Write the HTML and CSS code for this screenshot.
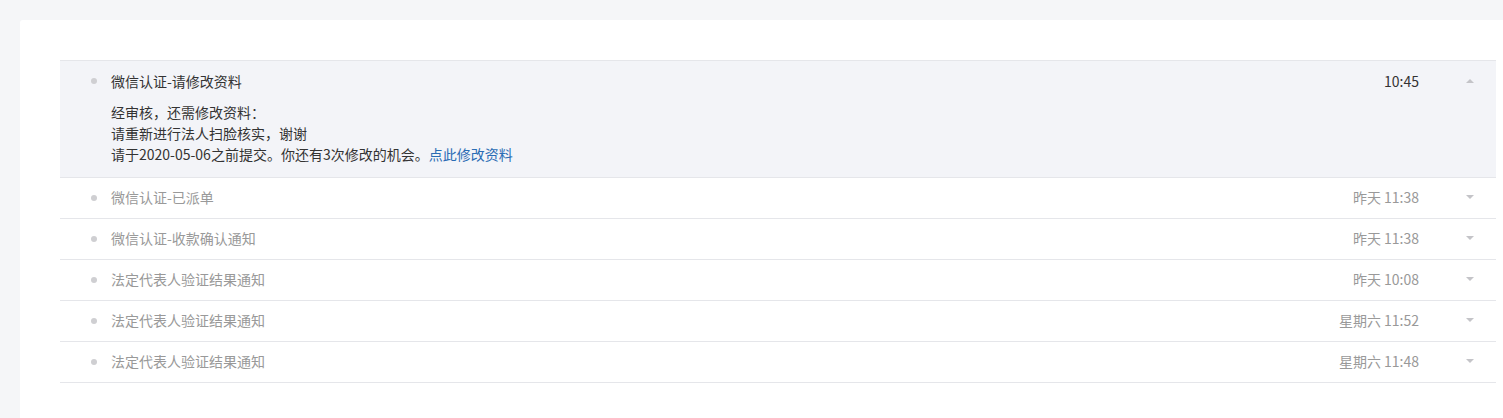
FILE: index.html
```html
<!DOCTYPE html>
<html lang="zh-CN">
<head>
<meta charset="utf-8">
<title>消息通知</title>
<link rel="stylesheet" href="styles.css">
</head>
<body>
<div class="card">
  <ul class="msg-list">
    <li class="msg open">
      <div class="msg-head">
        <span class="dot"></span>
        <span class="title">微信认证-请修改资料</span>
        <span class="time">10:45</span>
        <span class="caret"><span class="tri up"></span></span>
      </div>
      <div class="msg-body">
        <p>经审核，还需修改资料：</p>
        <p>请重新进行法人扫脸核实，谢谢</p>
        <p>请于2020-05-06之前提交。你还有3次修改的机会。<a class="link" href="#">点此修改资料</a></p>
      </div>
    </li>
    <li class="msg">
      <div class="msg-head">
        <span class="dot"></span>
        <span class="title">微信认证-已派单</span>
        <span class="time">昨天 11:38</span>
        <span class="caret"><span class="tri down"></span></span>
      </div>
    </li>
    <li class="msg">
      <div class="msg-head">
        <span class="dot"></span>
        <span class="title">微信认证-收款确认通知</span>
        <span class="time">昨天 11:38</span>
        <span class="caret"><span class="tri down"></span></span>
      </div>
    </li>
    <li class="msg">
      <div class="msg-head">
        <span class="dot"></span>
        <span class="title">法定代表人验证结果通知</span>
        <span class="time">昨天 10:08</span>
        <span class="caret"><span class="tri down"></span></span>
      </div>
    </li>
    <li class="msg">
      <div class="msg-head">
        <span class="dot"></span>
        <span class="title">法定代表人验证结果通知</span>
        <span class="time">星期六 11:52</span>
        <span class="caret"><span class="tri down"></span></span>
      </div>
    </li>
    <li class="msg">
      <div class="msg-head">
        <span class="dot"></span>
        <span class="title">法定代表人验证结果通知</span>
        <span class="time">星期六 11:48</span>
        <span class="caret"><span class="tri down"></span></span>
      </div>
    </li>
  </ul>
</div>
</body>
</html>
```
FILE: styles.css
```css
html, body {
  margin: 0;
  padding: 0;
  background: #f5f6f8;
  font-family: "Noto Sans CJK SC", "Liberation Sans", sans-serif;
  font-size: 14px;
  color: #333;
}
body {
  padding: 20px 0 0 20px;
  overflow: hidden;
  height: 100vh;
  box-sizing: border-box;
}
.card {
  background: #fff;
  border-radius: 3px 0 0 0;
  padding: 40px 7px 0 40px;
  height: 100%;
  box-sizing: border-box;
}
.msg-list {
  list-style: none;
  margin: 0;
  padding: 0;
  border-top: 1px solid #e5e6ea;
}
.msg {
  border-bottom: 1px solid #e5e6ea;
}
.msg.open {
  background: #f3f4f8;
}
.msg-head {
  display: flex;
  align-items: center;
  height: 40px;
  box-sizing: border-box;
  padding-bottom: 2px;
  line-height: 20px;
  padding-left: 31px;
  color: #999;
}
.msg.open .msg-head {
  height: 41px;
  color: #333;
}
.dot {
  width: 6px;
  height: 6px;
  border-radius: 50%;
  background: #cfcfd2;
  margin-right: 14px;
  margin-top: 1px;
  flex: none;
}
.title {
  flex: 1;
}
.time {
  flex: none;
}
.caret {
  width: 52px;
  margin-left: 25px;
  display: flex;
  justify-content: center;
  align-items: center;
  flex: none;
}
.tri {
  width: 0;
  height: 0;
  border-left: 4px solid transparent;
  border-right: 4px solid transparent;
}
.tri.up {
  border-bottom: 4px solid #c4c4c8;
}
.tri.down {
  border-top: 4px solid #c4c4c8;
}
.msg-body {
  padding: 0 0 12px 51px;
  line-height: 21px;
  color: #333;
}
.msg-body p {
  margin: 0;
}
.link {
  color: #2b6cb4;
  text-decoration: none;
}
```
